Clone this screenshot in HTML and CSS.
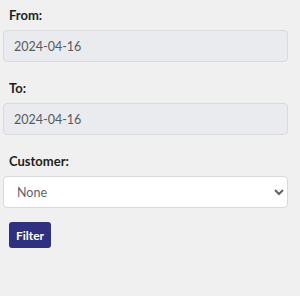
FILE: index.html
```html
<!DOCTYPE html>
<html>
<head>
<meta charset="utf-8">
<link rel="stylesheet" href="styles.css">
</head>
<body>
<form class="filter-form">
  <div class="field">
    <label class="field-label">From:</label>
    <input class="field-input readonly" type="text" value="2024-04-16" readonly>
  </div>
  <div class="field">
    <label class="field-label">To:</label>
    <input class="field-input readonly" type="text" value="2024-04-16" readonly>
  </div>
  <div class="field">
    <label class="field-label">Customer:</label>
    <select class="field-input select">
      <option>None</option>
    </select>
  </div>
  <button class="btn" type="button">Filter</button>
</form>
</body>
</html>
```

FILE: styles.css
```css
html, body {
  margin: 0;
  padding: 0;
  background: #f0f0f0;
  font-family: "Lato", "Open Sans", sans-serif;
}
.filter-form {
  width: 285px;
  padding: 6px 0 0 3px;
  display: flex;
  flex-direction: column;
  gap: 17px;
}
.field {
  display: flex;
  flex-direction: column;
  gap: 6px;
}
.field-label {
  font-size: 13px;
  font-weight: 700;
  line-height: 18px;
  color: #1e1e1e;
  padding-left: 6px;
}
.field-input {
  box-sizing: border-box;
  width: 285px;
  height: 32px;
  margin: 0;
  border: 1px solid #d8dadd;
  border-radius: 4px;
  font-family: inherit;
  font-size: 12.5px;
  color: #555a60;
  padding: 0 10px;
  outline: none;
}
.readonly {
  background: #e9ebee;
}
.select {
  background: #ffffff;
  color: #5f6368;
  padding: 0 9px;
}
.btn {
  align-self: flex-start;
  margin: -3px 0 0 6px;
  width: 42px;
  height: 26px;
  border: none;
  border-radius: 3px;
  background: #2f3080;
  color: #ffffff;
  font-family: inherit;
  font-size: 12px;
  font-weight: 700;
  padding: 0;
}
```
